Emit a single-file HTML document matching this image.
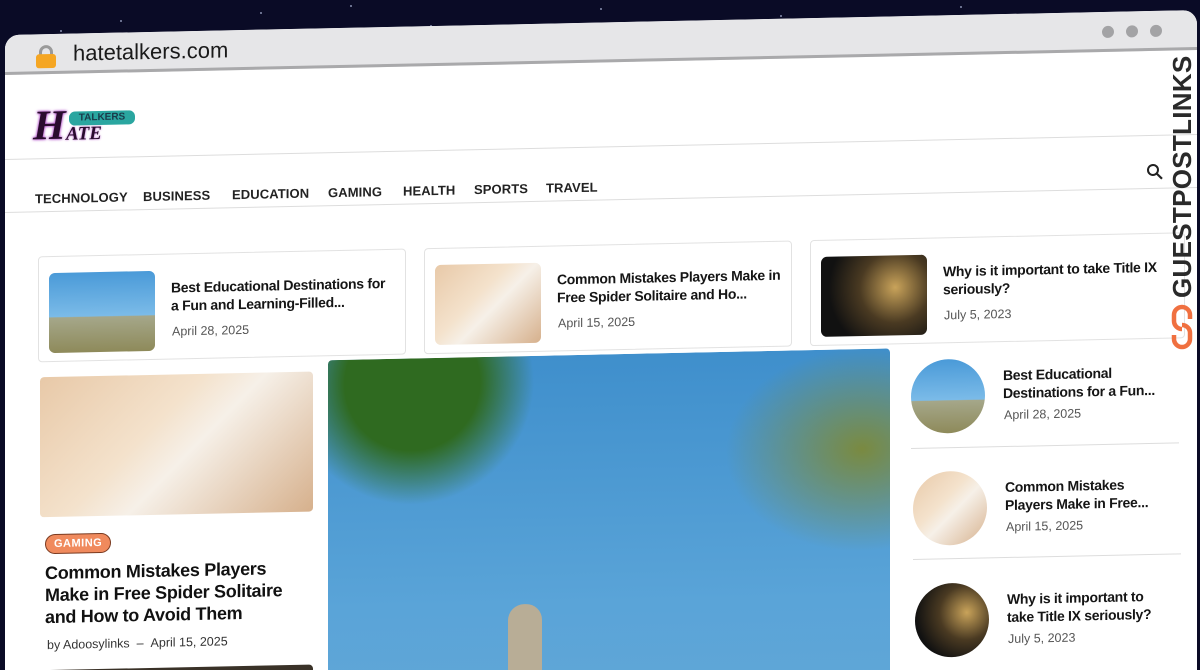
<!DOCTYPE html>
<html style="width:1200px;height:670px;overflow:hidden"><head><meta charset="utf-8"><style>
*{margin:0;padding:0;box-sizing:border-box}
body{width:1200px;height:670px;overflow:hidden;background:#0a0b26;font-family:"Liberation Sans",sans-serif;position:relative}
.star{position:absolute;width:2px;height:2px;background:#8890b0;border-radius:50%}
#win{position:absolute;left:5px;top:35px;width:1192px;height:820px;transform:skewY(-1.2deg);transform-origin:0 0;background:#fff;border-radius:14px;overflow:hidden}
.abs{position:absolute}
#bar{left:0;top:0;width:100%;height:40px;background:#e6e6e8;border-bottom:3px solid #a9a9ab}
.dot{width:12px;height:12px;border-radius:50%;background:#a3a3a5;top:14px}
.card{border:1px solid #e2e2e2;border-radius:4px;background:#fff}
.thumb{border-radius:6px}
.ct{font-weight:bold;font-size:14px;line-height:18px;color:#151515;letter-spacing:-.3px}
.dt{font-size:12.5px;color:#555}
.nav{font-size:13px;color:#222;font-weight:bold;letter-spacing:.1px;top:157px}
.sky{background:linear-gradient(#4a9ad8,#7bbbe8 55%,#a5a78a 56%,#8e8a5a)}
.cards{background:linear-gradient(135deg,#e8c9a8,#f4e2cc 40%,#f6f0e8 55%,#d6b08c)}
.law{background:radial-gradient(circle at 70% 40%,#c9a35a,#4a3a22 40%,#111 75%)}
.circ{border-radius:50%;width:74px;height:74px}
.st{font-weight:bold;font-size:14px;line-height:18px;color:#151515;letter-spacing:-.3px}
</style></head><body>
<div class="star" style="left:120px;top:20px"></div><div class="star" style="left:260px;top:12px"></div><div class="star" style="left:430px;top:25px"></div><div class="star" style="left:600px;top:8px"></div><div class="star" style="left:780px;top:15px"></div><div class="star" style="left:960px;top:6px"></div><div class="star" style="left:60px;top:30px"></div><div class="star" style="left:350px;top:5px"></div>
<div id="win">
 <div id="bar" class="abs">
  <div class="abs" style="left:30px;top:11px;width:22px;height:22px">
   <div class="abs" style="left:4px;top:0;width:14px;height:14px;border:3px solid #9a9a9a;border-radius:7px 7px 0 0"></div>
   <div class="abs" style="left:1px;top:9px;width:20px;height:14px;background:#f5a623;border-radius:3px"></div>
  </div>
  <div class="abs" style="left:68px;top:7px;font-size:22px;color:#1a1a1a">hatetalkers.com</div>
  <div class="abs dot" style="left:1097px"></div><div class="abs dot" style="left:1121px"></div><div class="abs dot" style="left:1145px"></div>
 </div>
 <div class="abs" style="left:28px;top:72px;width:110px;height:42px">
  <div class="abs" style="left:0;top:-4px;font:italic bold 42px 'Liberation Serif',serif;color:#2a0c2e;text-shadow:0 0 3px #b04dc8,0 0 2px #b04dc8">H</div>
  <div class="abs" style="left:36px;top:6px;width:66px;height:14px;background:#2aa6a0;border-radius:6px;font:bold 10px 'Liberation Sans';color:#1a3a4a;text-align:center;line-height:14px">TALKERS</div>
  <div class="abs" style="left:33px;top:18px;font:italic bold 19px 'Liberation Serif';color:#2a0c2e;text-shadow:0 0 2px #b04dc8">ATE</div>
 </div>
 <div class="abs" style="left:0;top:124px;width:100%;height:1px;background:#ddd"></div>
 <div class="abs nav" style="left:30px">TECHNOLOGY</div>
 <div class="abs nav" style="left:138px">BUSINESS</div>
 <div class="abs nav" style="left:227px">EDUCATION</div>
 <div class="abs nav" style="left:323px">GAMING</div>
 <div class="abs nav" style="left:398px">HEALTH</div>
 <div class="abs nav" style="left:469px">SPORTS</div>
 <div class="abs nav" style="left:541px">TRAVEL</div>
 <svg class="abs" style="left:1141px;top:152px" width="18" height="18" viewBox="0 0 18 18"><circle cx="7" cy="7" r="5" fill="none" stroke="#222" stroke-width="2"/><path d="M11 11l5 5" stroke="#222" stroke-width="2.2"/></svg>
 <div class="abs" style="left:0;top:177px;width:100%;height:1px;background:#ddd"></div>

 <div class="abs card" style="left:33px;top:222px;width:368px;height:106px">
  <div class="abs thumb sky" style="left:10px;top:16px;width:106px;height:80px"></div>
  <div class="abs ct" style="left:132px;top:24px;width:220px">Best Educational Destinations for a Fun and Learning-Filled...</div>
  <div class="abs dt" style="left:133px;top:70px">April 28, 2025</div>
 </div>
 <div class="abs card" style="left:419px;top:222px;width:368px;height:106px">
  <div class="abs thumb cards" style="left:10px;top:16px;width:106px;height:80px"></div>
  <div class="abs ct" style="left:132px;top:24px;width:225px">Common Mistakes Players Make in Free Spider Solitaire and Ho...</div>
  <div class="abs dt" style="left:133px;top:70px">April 15, 2025</div>
 </div>
 <div class="abs card" style="left:805px;top:222px;width:375px;height:106px">
  <div class="abs thumb law" style="left:10px;top:16px;width:106px;height:80px"></div>
  <div class="abs ct" style="left:132px;top:24px;width:225px">Why is it important to take Title IX seriously?</div>
  <div class="abs dt" style="left:133px;top:70px">July 5, 2023</div>
 </div>

 <div class="abs cards" style="left:35px;top:343px;width:273px;height:140px;border-radius:4px"></div>
 <div class="abs" style="left:40px;top:500px;background:#f08a5d;border:1px solid #7a3a20;border-radius:10px;color:#fff;font-size:11px;font-weight:bold;padding:3px 8px;letter-spacing:.5px">GAMING</div>
 <div class="abs" style="left:40px;top:528px;width:250px;font-size:18px;font-weight:bold;line-height:22px;color:#111;letter-spacing:-.3px">Common Mistakes Players Make in Free Spider Solitaire and How to Avoid Them</div>
 <div class="abs" style="left:42px;top:604px;font-size:12.5px;color:#333">by Adoosylinks &nbsp;– &nbsp;April 15, 2025</div>
 <div class="abs" style="left:35px;top:636px;width:273px;height:60px;background:#3a3228;border-radius:4px"></div>

 <div class="abs" style="left:323px;top:332px;width:562px;height:500px;border-radius:4px;background:radial-gradient(ellipse at 15% 5%,#2f6a20 0,#2f6a20 10%,transparent 18%),radial-gradient(ellipse at 95% 20%,#7a8a40 0,transparent 18%),linear-gradient(#3f8fcc,#5aa4d8 50%,#6aaad4)"></div>
 <div class="abs" style="left:503px;top:580px;width:34px;height:250px;background:#b8ad96;border-radius:16px 16px 0 0"></div>

 <div class="abs circ sky" style="left:906px;top:344px"></div>
 <div class="abs st" style="left:998px;top:352px;width:165px">Best Educational Destinations for a Fun...</div>
 <div class="abs dt" style="left:999px;top:394px">April 28, 2025</div>
 <div class="abs" style="left:906px;top:432px;width:268px;height:1px;background:#ddd"></div>
 <div class="abs circ cards" style="left:908px;top:456px"></div>
 <div class="abs st" style="left:1000px;top:464px;width:160px">Common Mistakes Players Make in Free...</div>
 <div class="abs dt" style="left:1001px;top:506px">April 15, 2025</div>
 <div class="abs" style="left:908px;top:543px;width:268px;height:1px;background:#ddd"></div>
 <div class="abs circ law" style="left:910px;top:568px"></div>
 <div class="abs st" style="left:1002px;top:576px;width:160px">Why is it important to take Title IX seriously?</div>
 <div class="abs dt" style="left:1003px;top:618px">July 5, 2023</div>
</div>
<div class="abs" style="left:1167px;top:298px;width:240px;transform:rotate(-90deg);transform-origin:0 0;font-size:26px;font-weight:bold;color:#2a2a2a;letter-spacing:.3px;line-height:30px">GUESTPOSTLINKS</div>
<svg class="abs" style="left:1170px;top:303px" width="24" height="48" viewBox="0 0 24 48"><path d="M12 4a8 8 0 0 0-8 8v6a8 8 0 0 0 8 8M12 44a8 8 0 0 0 8-8v-6a8 8 0 0 0-8-8M12 4a8 8 0 0 1 8 8v4M12 44a8 8 0 0 1-8-8v-4" fill="none" stroke="#f07040" stroke-width="4.5"/></svg>
</body></html>
